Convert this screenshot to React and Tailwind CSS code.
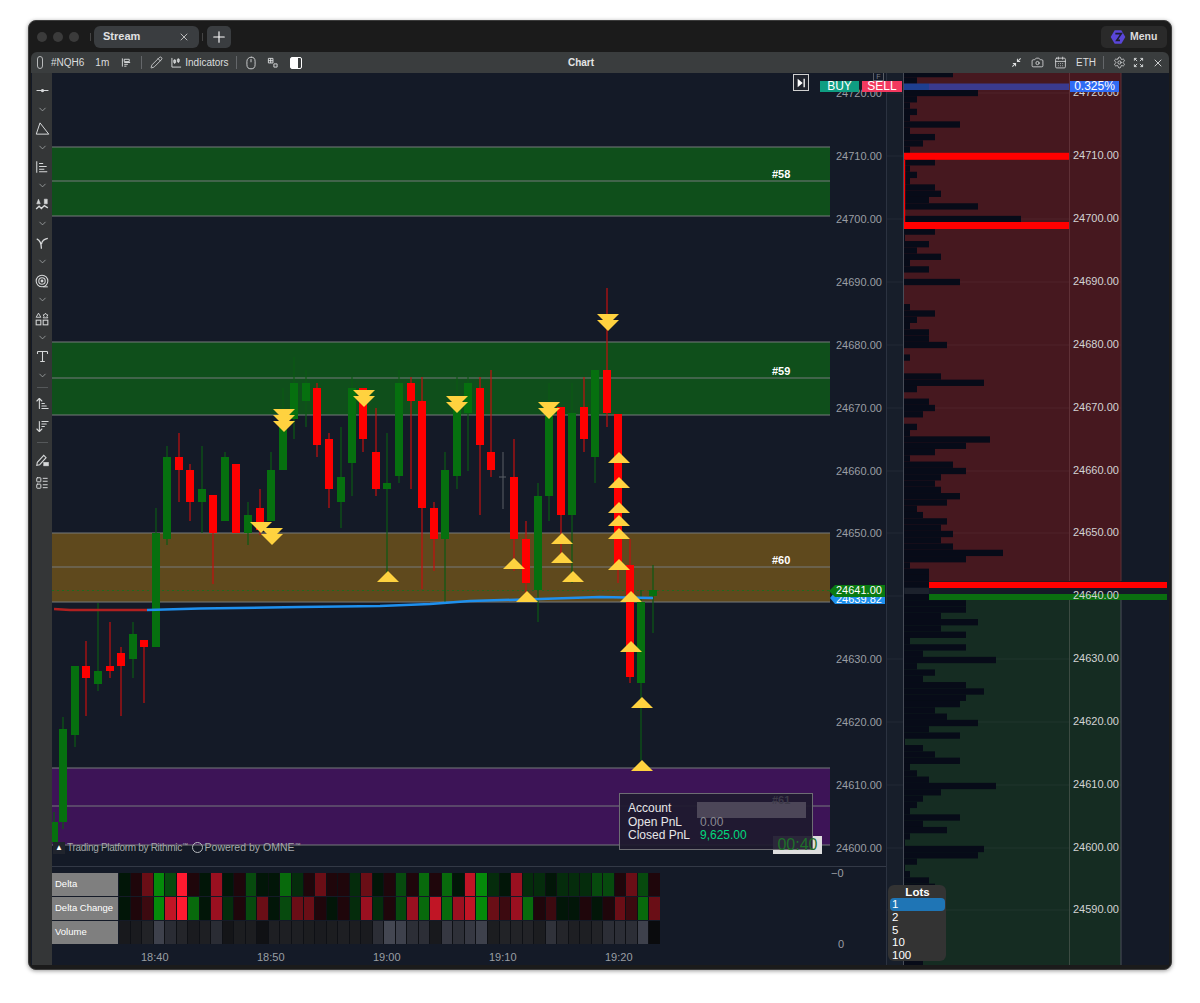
import {
  ArrowDownWideNarrow,
  ArrowUpNarrowWide,
  CalendarDays,
  Camera,
  ChevronDown,
  LayoutList,
  Mouse,
  Pencil,
  Plus,
  Settings,
  Type,
  X,
} from "lucide-react";

// [center x, body top, body bottom, wick top, wick bottom, up?]
const candles = [
  [54, 822, 842, 812, 853, 1],
  [63, 729, 822, 717, 829, 1],
  [75, 666, 735, 666, 747, 1],
  [86, 666, 678, 641, 716, 0],
  [98, 671, 684, 603, 691, 1],
  [110, 666, 671, 622, 678, 0],
  [121, 653, 666, 647, 716, 0],
  [133, 634, 659, 622, 678, 1],
  [144, 640, 647, 640, 703, 0],
  [156, 533, 647, 508, 647, 1],
  [167, 457, 539, 446, 545, 1],
  [179, 457, 470, 433, 502, 0],
  [190, 470, 502, 464, 521, 0],
  [202, 489, 502, 446, 533, 1],
  [213, 495, 533, 495, 584, 0],
  [225, 457, 521, 452, 521, 1],
  [236, 464, 533, 464, 533, 0],
  [248, 515, 533, 502, 545, 1],
  [260, 508, 530, 489, 535, 0],
  [271, 470, 521, 452, 521, 1],
  [283, 415, 470, 388, 470, 1],
  [294, 383, 419, 357, 439, 1],
  [306, 383, 401, 370, 427, 1],
  [317, 388, 445, 383, 457, 0],
  [329, 439, 489, 433, 508, 0],
  [341, 477, 502, 427, 528, 1],
  [352, 388, 463, 377, 496, 1],
  [363, 388, 439, 388, 452, 0],
  [376, 452, 489, 408, 496, 0],
  [387, 483, 489, 433, 573, 1],
  [399, 383, 476, 370, 483, 1],
  [411, 383, 401, 377, 489, 0],
  [422, 401, 508, 377, 589, 0],
  [434, 508, 539, 502, 571, 0],
  [445, 470, 539, 452, 602, 1],
  [457, 400, 476, 377, 489, 1],
  [468, 383, 413, 377, 471, 1],
  [480, 388, 445, 377, 515, 0],
  [491, 452, 470, 370, 477, 0],
  [514, 477, 539, 439, 571, 0],
  [526, 539, 583, 521, 602, 0],
  [538, 496, 590, 483, 622, 1],
  [549, 410, 496, 383, 521, 1],
  [561, 407, 515, 407, 557, 0],
  [572, 413, 515, 383, 583, 1],
  [584, 407, 439, 377, 452, 0],
  [595, 370, 457, 370, 483, 1],
  [607, 370, 413, 288, 427, 0],
  [618, 414, 570, 414, 583, 0],
  [630, 565, 677, 539, 683, 0],
  [641, 602, 683, 590, 760, 1],
  [653, 590, 596, 565, 633, 1],
];

// [center x, top edge]
const downArrows = [
  [284, 409], [284, 415], [284, 421],
  [261, 522], [272, 528], [272, 534],
  [364, 390], [364, 396],
  [457, 396], [457, 402],
  [549, 402], [549, 408],
  [608, 314], [608, 320],
];

// [center x, tip]
const upArrows = [
  [619, 452], [619, 477], [619, 502], [619, 515], [619, 528], [619, 559],
  [562, 533], [562, 552], [514, 558], [573, 571], [388, 571],
  [527, 591], [631, 591], [631, 641], [642, 697], [642, 760],
];

const zones = [
  { top: 147, mid: 181, bottom: 216, fill: "#0f4f1b", label: "#58" },
  { top: 342, mid: 378, bottom: 415, fill: "#0f4f1b", label: "#59" },
  { top: 533, mid: 567, bottom: 602, fill: "#5f491d", label: "#60" },
  { top: 768, mid: 806, bottom: 845, fill: "#3d1457", label: "" },
];

const axisPrices = [
  [24720, 94], [24710, 157], [24700, 220], [24690, 283], [24680, 346], [24670, 409],
  [24660, 472], [24650, 534], [24630, 660], [24620, 723], [24610, 786], [24600, 849],
];

const domPrices = [
  [24720, 93], [24710, 156], [24700, 219], [24690, 282], [24680, 345], [24670, 408],
  [24660, 471], [24650, 533], [24640, 596], [24630, 659], [24620, 722], [24610, 785],
  [24600, 848], [24590, 910],
];

// volume profile, one entry per price row from the top of the panel
const profile = [
  49, 13, 13, 74, 13, 6, 13, 6, 56, 6, 31, 19, 6, 0, 31, 6, 13, 6, 31, 37, 25, 74, 0, 117, 0,
  31, 1, 25, 13, 37, 6, 25, 0, 56, 0, 0, 0, 6, 31, 13, 6, 25, 25, 43, 0, 6, 0, 0, 37, 80, 13,
  0, 25, 31, 19, 0, 13, 6, 86, 62, 31, 6, 49, 62, 37, 31, 37, 56, 43, 13, 19, 43, 37, 49, 37,
  49, 99, 62, 6, 25, 25, 25, 0, 25, 62, 62, 37, 74, 37, 62, 6, 62, 19, 92, 13, 31, 19, 62, 80,
  62, 56, 31, 43, 74, 25, 56, 1, 19, 31, 56, 6, 13, 25, 92, 37, 19, 13, 6, 56, 19, 43, 6, 1,
  80, 74, 13, 1, 6, 25, 31, 6, 19, 13, 25, 6, 19, 25, 13, 6, 19, 13, 19,
];

const heat = {
  a: "#021608", b: "#052c0c", c: "#074a0e", d: "#086a0c", e: "#058a0a",
  A: "#1f060b", B: "#3c0a10", C: "#6a0e16", D: "#9a1020", E: "#c01525", F: "#ff1a30",
};

const deltaRow = "aACecFAaDaAcaadbACAAbCaAcAdAdaEebaDbbabbbccACcA";
const changeRow = "aABeEFdaDbAcCacCCAaAbDbAcDdEdDEeCBDdABaaAaACBdC";
const volumeRow = [
  "#18191d", "#1a1b1f", "#222327", "#3e414c", "#2a2c34", "#24252a", "#1a1b1f", "#1e1f23",
  "#2a2c34", "#141518", "#1c1d20", "#1c1d20", "#101114", "#1e1f23", "#1e1f23", "#1e1f23",
  "#1c1d20", "#1a1b1f", "#1c1d20", "#1e1f23", "#1c1d20", "#1a1b1f", "#2c2e36", "#444752",
  "#3e414c", "#2c2e36", "#2c2e36", "#18191d", "#363842", "#2e3038", "#363842", "#3e414c",
  "#1c1d20", "#222327", "#222327", "#222327", "#1c1d20", "#30323a", "#24252a", "#1e1f23",
  "#1e1f23", "#222327", "#2c2e36", "#2c2e36", "#2c2e36", "#3e414c", "#0a0b0d",
];

const indicatorRows = [
  { name: "Delta", cells: deltaRow.split("").map((k) => heat[k]) },
  { name: "Delta Change", cells: changeRow.split("").map((k) => heat[k]) },
  { name: "Volume", cells: volumeRow },
];

const timeLabels = ["18:40", "18:50", "19:00", "19:10", "19:20"];

function Glyph({ children, size = 13, className = "" }) {
  return (
    <svg
      viewBox="0 0 24 24"
      width={size}
      height={size}
      fill="none"
      stroke="currentColor"
      strokeWidth="2"
      className={"shrink-0 " + className}
    >
      {children}
    </svg>
  );
}

function Chevron() {
  return (
    <div className="h-[19px] flex items-center justify-center">
      <ChevronDown size={11} strokeWidth={1.6} className="text-[#b0b3b5]" />
    </div>
  );
}

function Tool({ children }) {
  return <div className="h-[19px] flex items-center justify-center text-[#d6d8d9]">{children}</div>;
}

function ToolStrip() {
  return (
    <div className="w-[20px] ml-[1px] bg-[#343637] pt-[8px] flex flex-col shrink-0">
      <Tool>
        <Glyph size={13}>
          <path d="M1 12h22" />
          <circle cx="12" cy="12" r="2" fill="currentColor" />
        </Glyph>
      </Tool>
      <Chevron />
      <Tool>
        <Glyph size={15}>
          <path d="M8 3 22 21H2z" strokeLinejoin="round" strokeWidth="1.6" />
        </Glyph>
      </Tool>
      <Chevron />
      <Tool>
        <Glyph size={14}>
          <path d="M3 2v20M7 6h7M7 11h13M7 16h9M7 20h14" strokeWidth="1.8" />
        </Glyph>
      </Tool>
      <Chevron />
      <Tool>
        <Glyph size={14}>
          <path d="M2 19l5-5 4 4 5-5 6 4" strokeWidth="2.4" />
          <path d="M6 2 3 10h6zM16 2h5v8h-5z" fill="currentColor" strokeWidth="1" />
        </Glyph>
      </Tool>
      <Chevron />
      <Tool>
        <Glyph size={14}>
          <path d="M3 5c5 2 8 6 8 17M11 14c1-6 5-9 11-10" strokeWidth="2.2" />
        </Glyph>
      </Tool>
      <Chevron />
      <Tool>
        <Glyph size={14}>
          <circle cx="12" cy="12" r="10" strokeWidth="1.8" />
          <circle cx="12" cy="12" r="5.5" strokeWidth="1.8" />
          <circle cx="12" cy="12" r="1.5" fill="currentColor" />
          <path d="M14 22h8" strokeWidth="1.8" />
        </Glyph>
      </Tool>
      <Chevron />
      <Tool>
        <Glyph size={14}>
          <path d="M6 2 2 9h8zM18 2l1.5 2.5L22 5l-1.5 2.5L22 10h-8l1.5-2.5L14 5l2.5-.5z" strokeWidth="1.6" />
          <rect x="2" y="14" width="8" height="8" strokeWidth="1.8" />
          <rect x="14" y="14" width="8" height="8" strokeWidth="1.8" />
        </Glyph>
      </Tool>
      <Chevron />
      <Tool>
        <Type size={15} strokeWidth={1.7} />
      </Tool>
      <Chevron />
      <div className="h-[5px] flex items-center justify-center">
        <div className="w-[11px] h-px bg-[#55585a]" />
      </div>
      <div className="mt-[4px]">
        <Tool>
          <ArrowUpNarrowWide size={15} strokeWidth={1.7} />
        </Tool>
      </div>
      <div className="mt-[4px]">
        <Tool>
          <ArrowDownWideNarrow size={15} strokeWidth={1.7} />
        </Tool>
      </div>
      <div className="h-[5px] mt-[4px] flex items-center justify-center">
        <div className="w-[11px] h-px bg-[#55585a]" />
      </div>
      <div className="mt-[5px]">
        <Tool>
          <Glyph size={14}>
            <path d="M3 21l1-5L15 4l4 4L8 20z" strokeWidth="1.8" />
            <rect x="15" y="16" width="8" height="6" fill="currentColor" strokeWidth="1" />
          </Glyph>
        </Tool>
      </div>
      <div className="mt-[4px]">
        <Tool>
          <LayoutList size={14} strokeWidth={1.7} />
        </Tool>
      </div>
    </div>
  );
}

function Toolbar() {
  return (
    <div className="h-[21px] bg-[#3a3d3e] rounded-t-[6px] flex items-center text-[#dcdedf] text-[10px] shrink-0">
      <div className="w-[530px] flex items-center shrink-0">
        <div className="ml-[6px] w-[6px] h-[13px] rounded-[3px] border border-[#b8babb]" />
        <span className="ml-[8px]">#NQH6</span>
        <span className="ml-[11px]">1m</span>
        <Glyph size={11} className="ml-[12px]">
          <path d="M3 3v18M7 5h11v5H7zM7 12h13M7 16h8M7 20h5" strokeWidth="2" />
        </Glyph>
        <div className="ml-[9px] w-px h-[13px] bg-[#64676a]" />
        <Pencil size={13} strokeWidth={1.5} className="ml-[8px]" />
        <Glyph size={11} className="ml-[8px]">
          <path d="M2 2v20h20M8 5v10M6 7h4v5H6zM16 3v10M14 5h4v5h-4z" strokeWidth="2" />
        </Glyph>
        <span className="ml-[3px]">Indicators</span>
        <div className="ml-[7px] w-px h-[13px] bg-[#64676a]" />
        <Mouse size={14} strokeWidth={1.5} className="ml-[7px]" />
        <Glyph size={11} className="ml-[9px]">
          <path d="M3 3h10v10H3zM3 8h10M8 3v10M15 15h7v7h-7z" strokeWidth="2" />
        </Glyph>
        <div className="ml-[12px] w-[12px] h-[12px] rounded-[2px] border border-white flex">
          <div className="w-[7px] bg-white" />
        </div>
      </div>
      <div className="w-[40px] text-center font-bold text-[#e4e5e6]">Chart</div>
      <div className="ml-auto flex items-center pr-[5px]">
        <Glyph size={11}>
          <path d="M14 10l7-7M14 4v6h6M10 14l-7 7M4 14h6v6" strokeWidth="2.2" />
        </Glyph>
        <Camera size={13} strokeWidth={1.5} className="ml-[9px]" />
        <CalendarDays size={13} strokeWidth={1.5} className="ml-[10px]" />
        <span className="ml-[9px]">ETH</span>
        <div className="ml-[7px] w-px h-[13px] bg-[#64676a]" />
        <Settings size={13} strokeWidth={1.5} className="ml-[9px]" />
        <Glyph size={11} className="ml-[7px]">
          <path d="M9 9 3 3M3 8V3h5M15 9l6-6M16 3h5v5M9 15l-6 6M3 16v5h5M15 15l6 6M21 16v5h-5" strokeWidth="2" />
        </Glyph>
        <X size={12} strokeWidth={1.8} className="ml-[8px]" />
      </div>
    </div>
  );
}

function TitleBar() {
  return (
    <div className="h-[31px] flex items-center shrink-0">
      <div className="ml-[8px] w-[10px] h-[10px] rounded-full bg-[#3b3b3b]" />
      <div className="ml-[6px] w-[10px] h-[10px] rounded-full bg-[#3b3b3b]" />
      <div className="ml-[6px] w-[10px] h-[10px] rounded-full bg-[#3b3b3b]" />
      <div className="ml-[11px] w-px h-[8px] bg-[#444]" />
      <div className="ml-[3px] w-[105px] h-[22px] rounded-[6px] bg-[#3a3d40] flex items-center px-[9px] text-[11px] font-bold text-[#e0e1e2]">
        Stream
        <X size={12} strokeWidth={1.6} className="ml-auto text-[#d8d8d8]" />
      </div>
      <div className="ml-[3px] w-px h-[8px] bg-[#444]" />
      <div className="ml-[4px] w-[24px] h-[22px] rounded-[5px] bg-[#3a3d40] flex items-center justify-center text-white">
        <Plus size={18} strokeWidth={1.5} />
      </div>
      <div className="ml-auto mr-[4px] w-[66px] h-[22px] rounded-[5px] bg-[#2a2a2a] flex items-center pl-[9px] text-[10.5px] font-bold text-[#dcdcdc]">
        <svg viewBox="0 0 24 24" className="w-[16px] h-[16px]">
          <path d="M7 2h10l6 10-6 10H7L1 12z" fill="#5a46d8" />
          <path d="M8 7h9l-7 10h5" fill="none" stroke="#1d1d30" strokeWidth="2.4" />
        </svg>
        <span className="ml-[4px]">Menu</span>
      </div>
    </div>
  );
}

function Chart() {
  return (
    <svg viewBox="52 73 834 794" className="w-[834px] h-[794px] block">
      {zones.map((z) => (
        <g key={z.top}>
          <rect x="52" y={z.top} width="778" height={z.bottom - z.top} fill={z.fill} />
          {[z.top, z.mid, z.bottom].map((y) => (
            <rect key={y} x="52" y={y - 0.5} width="778" height="1" fill="#777b7c" />
          ))}
          {z.label && (
            <text x="772" y={z.mid - 6} dominantBaseline="middle" className="fill-white text-[11px] font-bold">
              {z.label}
            </text>
          )}
        </g>
      ))}
      <path d="M52 590.5H830" stroke="#1f6a1f" strokeDasharray="2 3" />

      {candles.map(([x, top, bottom, wickTop, wickBottom, up]) => (
        <g key={x}>
          <rect x={x - 0.6} y={wickTop} width="1.2" height={wickBottom - wickTop} fill={up ? "#0d5a14" : "#c40f0f"} />
          <rect x={x - 4} y={top} width="8" height={bottom - top} fill={up ? "#06700f" : "#ff0000"} />
        </g>
      ))}
      <rect x="502.5" y="452" width="1" height="57" fill="#5a5e66" />
      <rect x="499" y="476.5" width="7" height="1" fill="#5a5e66" />

      <path d="M54 609 70 610H147" fill="none" stroke="#b02020" strokeWidth="2.5" />
      <path
        d="M147 610 200 608.5 300 607 380 606 430 604 470 601 540 599 600 597 653 598"
        fill="none"
        stroke="#1e90ee"
        strokeWidth="2.5"
      />

      {downArrows.map(([x, y]) => (
        <path key={x + "d" + y} d={`M${x - 11} ${y}h22l-11 11z`} fill="#ffd23f" />
      ))}
      {upArrows.map(([x, y]) => (
        <path key={x + "u" + y} d={`M${x} ${y}l11 11h-22z`} fill="#ffd23f" />
      ))}

      {axisPrices.map(([price, y]) => (
        <text key={price} x="836" y={y} dominantBaseline="middle" className="fill-[#9a9ea4] text-[11px]">
          {price}.00
        </text>
      ))}
      <path d="M830 598 835 592H885V604H835Z" fill="#1e90ee" />
      <text x="836" y="600" dominantBaseline="middle" className="fill-white text-[11px]">
        24639.82
      </text>
      <path d="M829 591 835 585H885V597H835Z" fill="#0a7a12" />
      <text x="836" y="591.5" dominantBaseline="middle" className="fill-white text-[11px]">
        24641.00
      </text>
      <path d="M52 866.5H886" stroke="#333946" />
    </svg>
  );
}

function DomPanel() {
  return (
    <svg viewBox="886 73 283 892" className="w-[283px] h-[892px] block shrink-0">
      <rect x="886" y="73" width="17" height="892" fill="#171e2a" />
      <rect x="904" y="73" width="217" height="508.5" fill="#46181f" />
      <rect x="904" y="600" width="217" height="365" fill="#152c22" />

      {domPrices.map(([price, y]) => (
        <rect key={price} x="887" y={y - 0.5} width="234" height="1" fill="#ffffff" opacity="0.05" />
      ))}

      {profile.map((w, i) => (
        <rect key={i} x="904" y={70.95 + 6.3 * i} width={w} height="6.3" fill="#070b18" />
      ))}
      <rect x="905" y="588" width="24" height="6" fill="#1c212c" />

      <rect x="904" y="83.5" width="25" height="6.5" fill="#1e3f8f" />
      <rect x="929" y="83.5" width="141" height="6.5" fill="#3a3a8e" />
      <rect x="904" y="152.8" width="166" height="7" fill="#ff0000" />
      <rect x="904" y="222" width="166" height="7" fill="#ff0000" />
      <rect x="904" y="160" width="1.2" height="62" fill="#ff0000" />

      <rect x="929" y="582" width="238" height="6" fill="#ff0000" />
      <rect x="929" y="594" width="238" height="6" fill="#0a6e10" />

      <path d="M886.5 73V965" stroke="#2b3240" />
      <path d="M903.5 73V965" stroke="#474c57" />
      <path d="M1069.5 73V581" stroke="#5f3036" />
      <path d="M1069.5 600V965" stroke="#3c4b42" />
      <path d="M1121 73V581" stroke="#5f3036" />
      <path d="M1121 600V965" stroke="#4a4f58" />

      {domPrices.map(([price, y]) => (
        <text key={price} x="1073" y={y} dominantBaseline="middle" className="fill-[#d2d3d4] text-[11px]">
          {price}.00
        </text>
      ))}
    </svg>
  );
}

function Indicators() {
  return (
    <div className="relative h-[98px] pt-[6px]">
      <div className="flex flex-col gap-[1px] w-[608px]">
        {indicatorRows.map((row) => (
          <div key={row.name} className="flex h-[23px] gap-[1px]">
            <div className="w-[66px] bg-[#7f7f7f] flex items-center pl-[3px] text-[9.5px] text-white shrink-0">
              {row.name}
            </div>
            <div className="flex-1 grid grid-cols-[repeat(47,1fr)] gap-[1px] bg-[#0e1015]">
              {row.cells.map((color, i) => (
                <div key={i} style={{ backgroundColor: color }} />
              ))}
            </div>
          </div>
        ))}
      </div>
      <div className="absolute left-[779px] top-[-2px] text-[11px] text-[#9a9ea4]">−0</div>
      <div className="absolute left-[786px] top-[69px] text-[11px] text-[#9a9ea4]">0</div>
      <div className="flex w-[608px] mt-[5px] text-[11px] text-[#9a9ea4]">
        <div className="w-[74px] shrink-0" />
        {timeLabels.map((t) => (
          <div key={t} className="w-[116px] shrink-0 pl-[15px]">
            {t}
          </div>
        ))}
      </div>
    </div>
  );
}

function AccountPanel() {
  return (
    <>
      <div className="absolute left-[742px] top-[763px] w-[49px] h-[18px] bg-[#dedede]" />
      <div className="absolute left-[588px] top-[720px] w-[194px] h-[57px] bg-[#1e1a2eee] border border-[#6d6d73] pl-[8px] pt-[8px] text-[12px] leading-[13.5px] text-[#e6e6e8]">
        <div className="absolute left-[77px] top-[8px] w-[109px] h-[16px] bg-[#4c4658]" />
        <div className="absolute left-[152px] top-[0px] text-[11px] font-bold text-[#3d3a48]">#61</div>
        <div className="relative flex">
          <span className="w-[72px]">Account</span>
        </div>
        <div className="relative flex">
          <span className="w-[72px]">Open PnL</span>
          <span className="text-[#8a8a92]">0.00</span>
        </div>
        <div className="relative flex">
          <span className="w-[72px]">Closed PnL</span>
          <span className="text-[#00d97e]">9,625.00</span>
        </div>
      </div>
      <div className="absolute left-[742px] top-[763px] w-[49px] h-[18px] flex items-center justify-center text-[16px] text-[#1f6f2a]">
        00:40
      </div>
    </>
  );
}

function Lots() {
  return (
    <div className="absolute left-[857px] top-[812px] w-[58px] h-[76px] rounded-[6px] bg-[#333333] pl-[2px] pr-[1px] text-[11.5px] leading-[12.5px] text-white">
      <div className="text-center font-bold pt-[1px] h-[13px]">Lots</div>
      <div className="h-[13px] rounded-[4px] bg-[#1f75b5] pl-[2px]">1</div>
      <div className="pl-[2px]">2</div>
      <div className="pl-[2px]">5</div>
      <div className="pl-[2px]">10</div>
      <div className="pl-[2px]">100</div>
    </div>
  );
}

function Overlays() {
  return (
    <>
      <button className="absolute left-[762px] top-[1px] w-[16px] h-[17px] border border-[#d0d0d0] bg-[#20242d] flex items-center justify-center">
        <svg viewBox="0 0 12 12" className="w-[10px] h-[10px]">
          <path d="M2 1 8 6 2 11zM9 1h1.6v10H9z" fill="#ffffff" />
        </svg>
      </button>
      <div className="absolute left-[842px] top-[0px] w-[11px] h-[8px] border border-[#5a5e66] border-t-0 text-[7px] leading-[7px] text-center text-[#7a7e86]">
        F
      </div>
      <div className="absolute left-[789px] top-[8px] w-[39px] h-[11px] bg-[#0f9d82] text-white text-[12px] leading-[11px] text-center">
        BUY
      </div>
      <div className="absolute left-[831px] top-[8px] w-[40px] h-[11px] bg-[#f2395f] text-white text-[12px] leading-[11px] text-center">
        SELL
      </div>
      <div className="absolute left-[1039px] top-[8px] w-[49px] h-[11px] bg-[#2f6bf5] text-white text-[12px] leading-[11px] text-center">
        0.325%
      </div>
      <div className="absolute left-[22px] top-[767px] flex items-center text-[#a4a7ab]">
        <div className="w-[12px] h-[12px] bg-[#20242d] text-white text-[8px] leading-[12px] text-center">▲</div>
        <span className="ml-[2px] text-[10px] tracking-[-0.3px]">
          Trading Platform by Rithmic<span className="text-[6px] align-super">™</span>
        </span>
        <div className="ml-[4px] w-[11px] h-[11px] rounded-full border-[1.5px] border-[#b8bbbe]" />
        <span className="ml-[2px] text-[10.5px]">
          Powered by OMNE<span className="text-[6px] align-super">™</span>
        </span>
      </div>
      <AccountPanel />
      <Lots />
    </>
  );
}

export default function App() {
  return (
    <div className="w-[1200px] h-[1003px] bg-white pt-[20px] pl-[28px] font-['Liberation_Sans',sans-serif]">
      <div className="w-[1144px] h-[950px] rounded-[8px] bg-[#1b1b1b] border border-[#3c3c3c] shadow-[0_1px_4px_rgba(0,0,0,0.4)] flex flex-col overflow-hidden">
        <TitleBar />
        <div className="mx-[2px] flex flex-col">
          <Toolbar />
          <div className="relative flex h-[892px] bg-[#141a27]">
            <ToolStrip />
            <div className="w-[834px] shrink-0">
              <Chart />
              <Indicators />
            </div>
            <DomPanel />
            <Overlays />
          </div>
        </div>
      </div>
    </div>
  );
}
